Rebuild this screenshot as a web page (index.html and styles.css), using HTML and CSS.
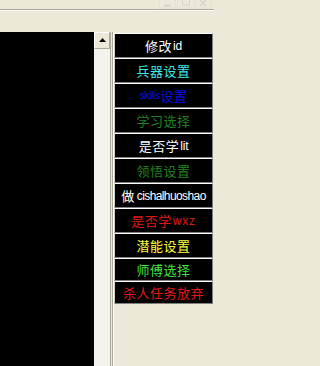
FILE: index.html
```html
<!DOCTYPE html>
<html>
<head>
<meta charset="utf-8">
<link rel="stylesheet" href="styles.css">
</head>
<body>
<div class="window">
  <div class="titlebar">
    <svg class="tb-icons" width="54" height="9" viewBox="0 0 54 9">
      <rect x="0.5" y="-2" width="16" height="10" fill="none" stroke="#e4e1d5"/>
      <line x1="5" y1="5.5" x2="12" y2="5.5" stroke="#d8d5c8" stroke-width="2"/>
      <rect x="18.5" y="-2" width="16" height="10" fill="none" stroke="#e4e1d5"/>
      <rect x="23.5" y="-1" width="7" height="6" fill="none" stroke="#d8d5c8"/>
      <rect x="36.5" y="-2" width="16" height="10" fill="none" stroke="#e4e1d5"/>
      <path d="M41 0 L47 6 M47 0 L41 6" stroke="#d8d5c8" stroke-width="1.5"/>
    </svg>
  </div>
  <div class="toolbar"></div>
  <div class="main">
    <div class="screen"></div>
    <div class="scrollbar">
      <div class="scroll-up"><svg width="7" height="4" viewBox="0 0 7 4"><path d="M3.5 0 L7 4 L0 4 Z" fill="#000"/></svg></div>
    </div>
    <div class="gutter"></div>
    <div class="panel">
      <div class="btn c-white">修改<span class="lt">id</span></div>
      <div class="btn c-cyan">兵器设置</div>
      <div class="btn c-blue"><span class="lt narrow">skills</span>设置</div>
      <div class="btn c-dgreen">学习选择</div>
      <div class="btn c-white">是否学<span class="lt">lit</span></div>
      <div class="btn c-dgreen">领悟设置</div>
      <div class="btn c-white">做<span class="lt gap">cishalhuoshao</span></div>
      <div class="btn c-red">是否学<span class="lt wide">wxz</span></div>
      <div class="btn c-yellow">潜能设置</div>
      <div class="btn short c-lime">师傅选择</div>
      <div class="btn short c-red">杀人任务放弃</div>
    </div>
  </div>
</div>
</body>
</html>
```
FILE: styles.css
```css
html, body {
  margin: 0;
  padding: 0;
  background: #ece9d8;
}
.window {
  width: 214px;
  height: 366px;
  display: flex;
  flex-direction: column;
  overflow: hidden;
  font-family: "Noto Sans CJK SC", "DejaVu Sans", sans-serif;
}
.titlebar {
  height: 9px;
  display: flex;
  justify-content: flex-end;
  padding-right: 1px;
}
.tb-icons {
  display: block;
}
.toolbar {
  height: 21px;
  border-top: 1px solid #aca899;
  border-bottom: 1px solid #ece9d8;
  box-shadow: inset 0 1px 0 #ffffff;
}
.main {
  flex: 1;
  display: flex;
  min-height: 0;
}
.screen {
  width: 94px;
  background: #000;
}
.scrollbar {
  width: 16px;
  background: #f4f3ee;
  border-right: 1px solid #aca899;
}
.scroll-up {
  width: 14px;
  height: 15px;
  background: #ece9d8;
  border-top: 1px solid #ffffff;
  border-left: 1px solid #ffffff;
  border-right: 1px solid #aca899;
  border-bottom: 1px solid #aca899;
  display: flex;
  align-items: center;
  justify-content: center;
}
.scroll-up svg { display: block; margin-top: -1px; }
.gutter {
  width: 1px;
  background: #ece9d8;
}
.panel {
  flex: 1;
  border-left: 1px solid #aca899;
  box-shadow: inset 1px 0 0 #ffffff;
  padding: 1px 1px 0 1px;
  display: flex;
  flex-direction: column;
}
.btn {
  height: 23px;
  background: #000;
  border-top: 1px solid #ffffff;
  border-left: 1px solid #d4d0c8;
  border-right: 1px solid #808080;
  border-bottom: 1px solid #808080;
  display: flex;
  align-items: center;
  justify-content: center;
  font-size: 13px;
  letter-spacing: 0.5px;
  line-height: 1;
  white-space: nowrap;
}
.btn.short {
  height: 21px;
}
.lt {
  font-family: "Liberation Sans", "DejaVu Sans", sans-serif;
  font-size: 12px;
  letter-spacing: -0.2px;
  margin-left: 1px;
}
.lt.narrow {
  font-size: 11px;
  letter-spacing: -0.6px;
  margin-left: 0;
  margin-right: 1px;
}
.lt.gap {
  margin-left: 2px;
  letter-spacing: -0.6px;
}
.lt.wide {
  letter-spacing: 0.8px;
}
.c-white { color: #ffffff; }
.c-cyan { color: #40e8e8; }
.c-blue { color: #0a0aee; }
.c-dgreen { color: #208020; }
.c-red { color: #e01818; }
.c-yellow { color: #ffff40; }
.c-lime { color: #40e040; }
```
